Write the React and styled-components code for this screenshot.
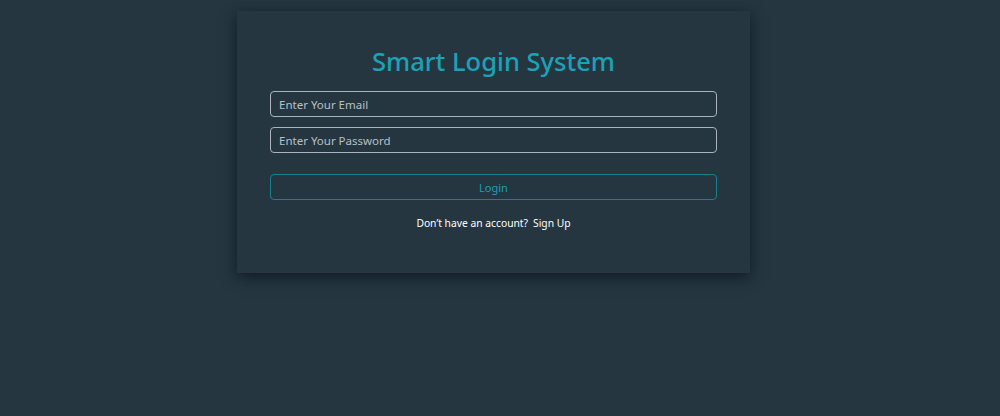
import { createGlobalStyle, styled } from "styled-components";

const GlobalStyle = createGlobalStyle`
  html, body {
    margin: 0;
    padding: 0;
    background-color: #253641;
    font-family: "Noto Sans", "Open Sans", sans-serif;
  }
`;

const Page = styled.div`
  min-height: 416px;
  display: flex;
  justify-content: center;
  padding: 11px 13px 0 0;
  box-sizing: border-box;
`;

const Card = styled.div`
  width: 513px;
  height: 262px;
  box-sizing: border-box;
  padding: 33px 33px 0 33px;
  background-color: #253641;
  box-shadow: 0 4px 14px rgba(10, 18, 24, 0.75);
  display: flex;
  flex-direction: column;
  align-items: stretch;
`;

const Title = styled.h1`
  margin: 0 0 13px 0;
  text-align: center;
  color: #1ba2b7;
  font-size: 25.5px;
  font-weight: 500;
  line-height: 34px;
`;

const Input = styled.input`
  height: 26px;
  box-sizing: border-box;
  margin-bottom: ${(p) => p.$gap || 10}px;
  padding: 0 8px;
  background: transparent;
  border: 1px solid #a9b4bc;
  border-radius: 4px;
  color: #dfe6ea;
  font-family: inherit;
  font-size: 11.5px;
  outline: none;

  &::placeholder {
    color: #b6c0c7;
  }
`;

const Button = styled.button`
  height: 26px;
  margin-top: 11px;
  background: transparent;
  border: 1px solid #1a7f8f;
  border-radius: 4px;
  color: #1aa0b5;
  font-family: inherit;
  font-size: 11px;
  cursor: pointer;
`;

const Footer = styled.p`
  margin: 16px 0 0 0;
  text-align: center;
  color: #ffffff;
  font-size: 10.3px;
`;

const SignUp = styled.a`
  color: #ffffff;
  text-decoration: none;
  margin-left: 5px;
`;

export default function App() {
  return (
    <>
      <GlobalStyle />
      <Page>
        <Card>
          <Title>Smart Login System</Title>
          <Input type="email" placeholder="Enter Your Email" />
          <Input type="password" placeholder="Enter Your Password" $gap={10} />
          <Button>Login</Button>
          <Footer>
            Don’t have an account?<SignUp href="#">Sign Up</SignUp>
          </Footer>
        </Card>
      </Page>
    </>
  );
}
